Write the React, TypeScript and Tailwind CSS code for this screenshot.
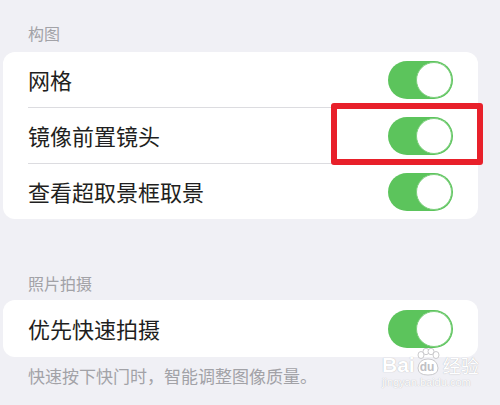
import React from 'react';

const Toggle: React.FC = () => (
  <div className="relative w-[65px] h-[38px] rounded-full bg-[#5cc45c]">
    <div className="absolute right-[1px] top-[1px] w-[36px] h-[36px] rounded-full bg-white border border-[#7fd07f]" />
  </div>
);

const Row: React.FC<{ label: string; divider?: boolean; h?: string }> = ({ label, divider, h = 'h-[56px]' }) => (
  <div className={`flex ${h} pl-[25px]`}>
    <div className={`flex flex-1 items-center justify-between pr-[25px] ${divider ? 'border-b border-[#dcdce0]' : ''}`}>
      <span className="text-[22px] text-[#1f1f21]">{label}</span>
      <Toggle />
    </div>
  </div>
);

export default function App() {
  return (
    <div
      className="relative w-[500px] h-[405px] overflow-hidden bg-[#f0f0f5]"
      style={{ fontFamily: '"Noto Sans CJK SC", "Noto Sans", sans-serif' }}
    >
      {/* 构图 */}
      <div className="pt-[23px] pl-[28px] h-[43px] text-[16px] leading-[20px] text-[#a2a2a7]">构图</div>
      <div className="mt-[9px] ml-[3px] w-[475px] rounded-[12px] bg-white">
        <Row label="网格" divider />
        <Row label="镜像前置镜头" divider />
        <Row label="查看超取景框取景" h="h-[55px]" />
      </div>

      {/* 照片拍摄 */}
      <div className="mt-[54px] pl-[28px] h-[20px] text-[16px] leading-[20px] text-[#a2a2a7]">照片拍摄</div>
      <div className="mt-[7px] ml-[3px] w-[475px] rounded-[12px] bg-white">
        <Row label="优先快速拍摄" h="h-[57px]" />
      </div>
      <div className="mt-[9px] pl-[28px] text-[17px] leading-[20px] text-[#a2a2a7]">
        快速按下快门时，智能调整图像质量。
      </div>

      {/* annotation */}
      <div className="absolute left-[331px] top-[103px] w-[152px] h-[62px] border-[6px] border-[#e8202a] rounded-[3px]" />

      {/* watermark */}
      <div className="absolute left-[382px] top-[348px] flex flex-col items-start">
        <div className="flex items-end">
          <span
            className="text-[21px] leading-[22px] font-bold text-white"
            style={{ fontFamily: '"Liberation Sans", sans-serif', textShadow: '0 0 1px #a8a8ac' }}
          >
            Bai
          </span>
          <div className="relative w-[26px] h-[28px]">
            <svg viewBox="0 0 26 28" className="absolute inset-0" width="26" height="28">
              <g fill="white" stroke="#bcbcc0" strokeWidth="0.8">
                <ellipse cx="6" cy="7" rx="3" ry="3.5" />
                <ellipse cx="11" cy="3.5" rx="3" ry="3.2" />
                <ellipse cx="16" cy="3.5" rx="3" ry="3.2" />
                <ellipse cx="21" cy="7" rx="3" ry="3.5" />
                <path d="M3 20 Q4 11 13 11 Q22 11 23 20 Q23 27 13 27 Q3 27 3 20 Z" />
              </g>
            </svg>
            <span
              className="absolute left-[5px] top-[12px] text-[12px] leading-[14px] font-bold text-[#c0c0c4]"
              style={{ fontFamily: '"Liberation Sans", sans-serif' }}
            >
              du
            </span>
          </div>
          <span className="ml-[2px] text-[18px] leading-[22px] text-white" style={{ textShadow: '0 0 1px #a8a8ac' }}>
            经验
          </span>
        </div>
        <span
          className="text-[11px] leading-[13px] text-white"
          style={{ fontFamily: '"Liberation Sans", sans-serif', textShadow: '0 0 1px #a8a8ac' }}
        >
          jingyan.baidu.com
        </span>
      </div>
    </div>
  );
}
